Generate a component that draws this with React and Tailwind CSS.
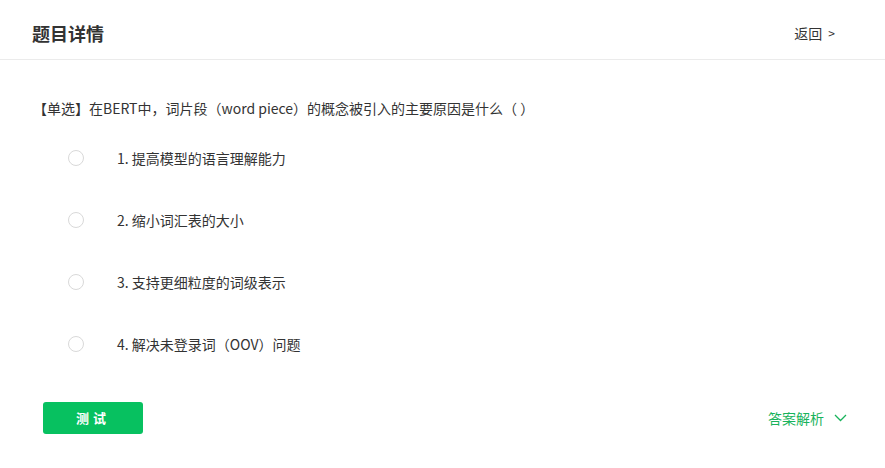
import React from "react";

const options = [
  "1. 提高模型的语言理解能力",
  "2. 缩小词汇表的大小",
  "3. 支持更细粒度的词级表示",
  "4. 解决未登录词（OOV）问题",
];

export default function App() {
  return (
    <div
      className="w-[885px] h-[468px] bg-white text-[#333]"
      style={{ fontFamily: '"Noto Sans CJK SC", "Noto Sans", sans-serif' }}
    >
      <div className="h-[60px] flex items-center justify-between pl-[32px] pr-[50px] border-b border-[#ebebeb]">
        <div className="text-[18px] font-bold text-[#333] leading-none pt-[6px]">题目详情</div>
        <div className="text-[14px] text-[#333] leading-none pt-[6px] flex items-center gap-[6px]">
          <span>返回</span>
          <span className="text-[12px]">&gt;</span>
        </div>
      </div>
      <div className="pl-[33px] pt-[38px]">
        <div className="text-[14px] leading-[20px]">【单选】在BERT中，词片段（word piece）的概念被引入的主要原因是什么（ ）</div>
        <div className="flex flex-col gap-[42px] mt-[30px] pl-[35px]">
          {options.map((o) => (
            <div key={o} className="flex items-center h-[20px]">
              <div className="w-[16px] h-[16px] rounded-full border border-[#d9d9d9] bg-white" />
              <div className="ml-[33px] text-[14px]">{o}</div>
            </div>
          ))}
        </div>
      </div>
      <div className="flex items-center justify-between pl-[43px] pr-[38px] mt-[48px]">
        <button className="w-[100px] h-[32px] rounded-[3px] bg-[#07c160] text-white text-[13px] font-bold tracking-[4px]">
          测试
        </button>
        <div className="flex items-center gap-[10px] text-[14px] text-[#19b35c]">
          <span>答案解析</span>
          <svg width="13" height="8" viewBox="0 0 13 8" fill="none">
            <path d="M1 1l5.5 5.5L12 1" stroke="#19b35c" strokeWidth="1.3" />
          </svg>
        </div>
      </div>
    </div>
  );
}
